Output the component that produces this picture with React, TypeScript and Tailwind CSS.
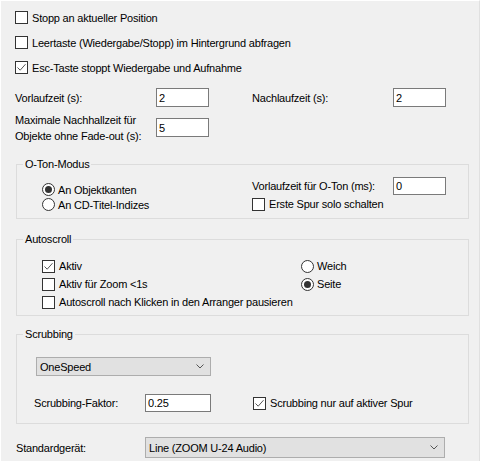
import React from 'react';

const Check: React.FC<{ checked?: boolean; label: string }> = ({ checked, label }) => (
  <div className="flex items-center">
    <span className="flex h-[13px] w-[13px] items-center justify-center border border-[#333333] bg-white">
      {checked && (
        <svg width="11" height="11" viewBox="0 0 11 11">
          <path d="M1.5 5.5 L4.2 8.2 L9.5 2.2" fill="none" stroke="#555555" strokeWidth="1" />
        </svg>
      )}
    </span>
    <span className="ml-[4px] whitespace-nowrap">{label}</span>
  </div>
);

const Radio: React.FC<{ checked?: boolean; label: string }> = ({ checked, label }) => (
  <div className="flex items-center">
    <span className="flex h-[13px] w-[13px] items-center justify-center rounded-full border border-[#333333] bg-white">
      {checked && <span className="h-[7px] w-[7px] rounded-full bg-[#333333]" />}
    </span>
    <span className="ml-[3px] whitespace-nowrap">{label}</span>
  </div>
);

const Field: React.FC<{ value: string; w: string; h?: string }> = ({ value, w, h = 'h-[19px]' }) => (
  <div className={`${w} ${h} flex items-center border border-[#7a7a7a] bg-white pl-[2px]`}>{value}</div>
);

const Combo: React.FC<{ value: string; w: string; h: string }> = ({ value, w, h }) => (
  <div className={`${w} ${h} flex items-center justify-between border border-[#adadad] bg-[#e1e1e1] pl-[3px] pr-[6px]`}>
    <span>{value}</span>
    <svg width="8" height="5" viewBox="0 0 8 5">
      <path d="M0.5 0.5 L4 4 L7.5 0.5" fill="none" stroke="#555555" strokeWidth="1" />
    </svg>
  </div>
);

const Group: React.FC<{ title: string; mt: string; children: React.ReactNode }> = ({ title, mt, children }) => (
  <div className={`relative ${mt} ml-[15px] w-[453px] border border-[#dcdcdc]`}>
    <span className="absolute -top-[8px] left-[6px] bg-[#f0f0f0] px-[2px] leading-[14px]">{title}</span>
    {children}
  </div>
);

export default function App() {
  return (
    <div
      className="h-[461px] w-[480px] overflow-hidden border-l border-t border-white border-r border-r-[#e0e0e0] bg-[#f0f0f0] text-[11px] leading-[14px] tracking-[-0.2px] text-black"
      style={{ fontFamily: '"Liberation Sans", Arial, sans-serif' }}
    >
      <div className="mt-[4px] pl-[14px]">
        <div className="flex h-[25px] items-center"><Check label="Stopp an aktueller Position" /></div>
        <div className="flex h-[25px] items-center"><Check label="Leertaste (Wiedergabe/Stopp) im Hintergrund abfragen" /></div>
        <div className="flex h-[25px] items-center"><Check checked label="Esc-Taste stoppt Wiedergabe und Aufnahme" /></div>
      </div>

      <div className="mt-[8px] flex h-[19px] items-center pl-[14px]">
        <span className="w-[141px]">Vorlaufzeit (s):</span>
        <Field value="2" w="w-[53px]" />
        <span className="ml-[43px] w-[141px]">Nachlaufzeit (s):</span>
        <Field value="2" w="w-[53px]" />
      </div>

      <div className="mt-[5px] flex h-[32px] pl-[14px]">
        <span className="w-[141px] leading-[16px]">
          Maximale Nachhallzeit für
          <br />
          Objekte ohne Fade-out (s):
        </span>
        <div className="mt-[6px]"><Field value="5" w="w-[53px]" /></div>
      </div>

      <Group title="O-Ton-Modus" mt="mt-[20px]">
        <div className="flex h-[53px]">
          <div className="w-[235px] pl-[25px] pt-[17px]">
            <div className="flex h-[15px] items-center"><Radio checked label="An Objektkanten" /></div>
            <div className="flex h-[15px] items-center"><Radio label="An CD-Titel-Indizes" /></div>
          </div>
          <div className="pt-[12px]">
            <div className="flex h-[18px] items-center">
              <span className="w-[141px]">Vorlaufzeit für O-Ton (ms):</span>
              <Field value="0" w="w-[53px]" h="h-[18px]" />
            </div>
            <div className="flex h-[18px] items-center"><Check label="Erste Spur solo schalten" /></div>
          </div>
        </div>
      </Group>

      <Group title="Autoscroll" mt="mt-[20px]">
        <div className="flex h-[75px] pt-[17px]">
          <div className="w-[284px] pl-[25px]">
            <div className="flex h-[18px] items-center"><Check checked label="Aktiv" /></div>
            <div className="flex h-[18px] items-center"><Check label="Aktiv für Zoom <1s" /></div>
            <div className="flex h-[18px] items-center"><Check label="Autoscroll nach Klicken in den Arranger pausieren" /></div>
          </div>
          <div>
            <div className="flex h-[18px] items-center"><Radio label="Weich" /></div>
            <div className="flex h-[18px] items-center"><Radio checked label="Seite" /></div>
          </div>
        </div>
      </Group>

      <Group title="Scrubbing" mt="mt-[18px]">
        <div className="h-[88px] pt-[22px]">
          <div className="pl-[19px]"><Combo value="OneSpeed" w="w-[175px]" h="h-[19px]" /></div>
          <div className="mt-[18px] flex h-[18px] items-center pl-[17px]">
            <span className="w-[111px]">Scrubbing-Faktor:</span>
            <Field value="0.25" w="w-[66px]" h="h-[18px]" />
            <div className="ml-[42px]"><Check checked label="Scrubbing nur auf aktiver Spur" /></div>
          </div>
        </div>
      </Group>

      <div className="mt-[13px] flex h-[21px] items-center pl-[15px]">
        <span className="w-[129px]">Standardgerät:</span>
        <Combo value="Line (ZOOM U-24 Audio)" w="w-[300px]" h="h-[21px]" />
      </div>
    </div>
  );
}
